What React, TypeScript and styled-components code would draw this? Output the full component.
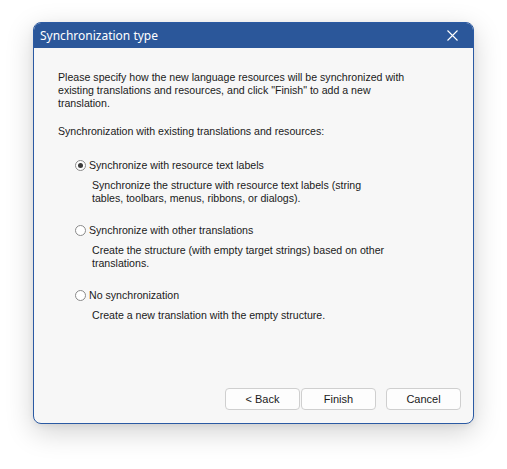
import styled, { createGlobalStyle } from 'styled-components'

const GlobalStyle = createGlobalStyle`
  html, body {
    margin: 0;
    background: #ffffff;
  }
  body {
    font-family: 'Liberation Sans', Arial, sans-serif;
  }
`

type Option = {
  id: string
  label: string
  description: string
}

const options: Option[] = [
  {
    id: 'labels',
    label: 'Synchronize with resource text labels',
    description:
      'Synchronize the structure with resource text labels (string tables, toolbars, menus, ribbons, or dialogs).'
  },
  {
    id: 'translations',
    label: 'Synchronize with other translations',
    description: 'Create the structure (with empty target strings) based on other translations.'
  },
  {
    id: 'none',
    label: 'No synchronization',
    description: 'Create a new translation with the empty structure.'
  }
]

const App = () => {
  const selected = 'labels'

  return (
    <Page>
      <GlobalStyle />
      <Window>
        <TitleBar>
          <Title>Synchronization type</Title>
          <CloseButton aria-label="Close">
            <svg width="11" height="11" viewBox="0 0 11 11">
              <path d="M0.5 0.5 L10.5 10.5 M10.5 0.5 L0.5 10.5" stroke="#ffffff" strokeWidth="1.1" />
            </svg>
          </CloseButton>
        </TitleBar>
        <Body>
          <Intro>
            Please specify how the new language resources will be synchronized with existing translations and
            resources, and click "Finish" to add a new translation.
          </Intro>
          <SectionLabel>Synchronization with existing translations and resources:</SectionLabel>
          <Options>
            {options.map((opt) => (
              <OptionItem key={opt.id}>
                <RadioRow>
                  <Radio $checked={opt.id === selected} />
                  <RadioLabel>{opt.label}</RadioLabel>
                </RadioRow>
                <Description>{opt.description}</Description>
              </OptionItem>
            ))}
          </Options>
          <Footer>
            <Button>&lt; Back</Button>
            <Button>Finish</Button>
            <Button $spaced>Cancel</Button>
          </Footer>
        </Body>
      </Window>
    </Page>
  )
}

const Page = styled.div`
  padding: 22px 0 0 33px;
  height: 469px;
  box-sizing: border-box;
`

const Window = styled.div`
  width: 441px;
  height: 402px;
  box-sizing: border-box;
  display: flex;
  flex-direction: column;
  background: #f7f7f7;
  border: 1px solid #2b5aa3;
  border-radius: 8px;
  overflow: hidden;
  box-shadow: 0 8px 28px rgba(0, 0, 0, 0.18), 0 2px 6px rgba(0, 0, 0, 0.06);
`

const TitleBar = styled.div`
  height: 25px;
  flex-shrink: 0;
  display: flex;
  align-items: center;
  justify-content: space-between;
  background: #2b579a;
  padding: 0 0 0 6px;
`

const Title = styled.div`
  color: #ffffff;
  font-family: 'Noto Sans', 'Open Sans', sans-serif;
  font-size: 12px;
`

const CloseButton = styled.div`
  width: 46px;
  height: 25px;
  display: flex;
  align-items: center;
  justify-content: center;
  margin-right: -2px;
`

const Body = styled.div`
  flex: 1;
  display: flex;
  flex-direction: column;
  padding: 23px 12px 13px 24px;
  color: #1a1a1a;
  font-size: 10.6px;
  line-height: 13px;
`

const Intro = styled.p`
  margin: 0;
  width: 360px;
`

const SectionLabel = styled.p`
  margin: 15px 0 0;
`

const Options = styled.div`
  display: flex;
  flex-direction: column;
  gap: 19px;
  margin-top: 21px;
  padding-left: 17px;
`

const OptionItem = styled.div`
  display: flex;
  flex-direction: column;
  gap: 7px;
`

const RadioRow = styled.div`
  display: flex;
  align-items: center;
  gap: 3px;
`

const Radio = styled.span<{ $checked?: boolean }>`
  width: 11px;
  height: 11px;
  box-sizing: border-box;
  border-radius: 50%;
  border: 1px solid #8a8a8a;
  background: #ffffff;
  display: flex;
  align-items: center;
  justify-content: center;
  &::after {
    content: '';
    width: 5px;
    height: 5px;
    border-radius: 50%;
    background: ${({ $checked }) => ($checked ? '#3c3c3c' : 'transparent')};
  }
`

const RadioLabel = styled.span``

const Description = styled.p`
  margin: 0;
  padding-left: 17px;
  width: 300px;
`

const Footer = styled.div`
  margin-top: auto;
  display: flex;
  justify-content: flex-end;
  gap: 1px;
`

const Button = styled.button<{ $spaced?: boolean }>`
  width: 75px;
  height: 22px;
  box-sizing: border-box;
  background: #fdfdfd;
  border: 1px solid #cfcfcf;
  border-radius: 4px;
  font-family: 'Liberation Sans', Arial, sans-serif;
  font-size: 11px;
  color: #1a1a1a;
  padding: 0;
  margin-left: ${({ $spaced }) => ($spaced ? '9px' : '0')};
`

export default App
